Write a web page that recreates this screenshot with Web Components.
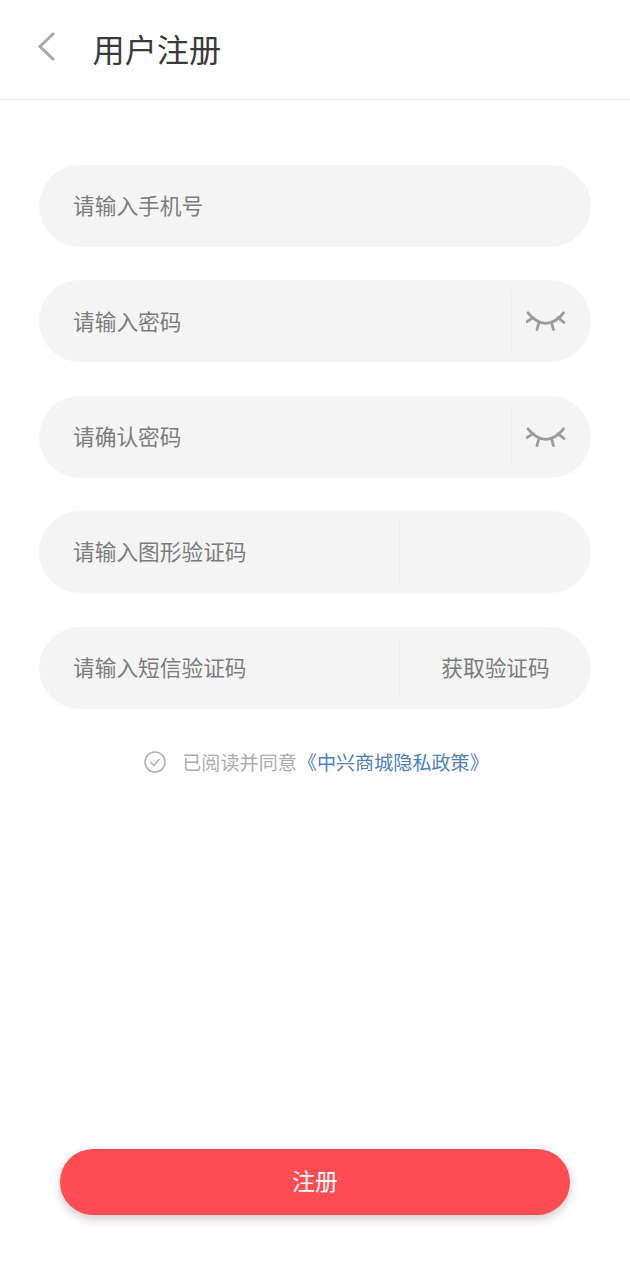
<!DOCTYPE html>
<html lang="zh">
<head>
<meta charset="utf-8">
<style>
  html, body { margin: 0; padding: 0; background: #fff; }
  body { font-family: "Noto Sans CJK SC", "Noto Sans", sans-serif; width: 630px; height: 1280px; overflow: hidden; }
</style>
</head>
<body>
<register-page>
  <app-header slot="header" title="用户注册"></app-header>
  <form-field slot="fields" placeholder="请输入手机号"></form-field>
  <form-field slot="fields" placeholder="请输入密码" side="eye"></form-field>
  <form-field slot="fields" placeholder="请确认密码" side="eye"></form-field>
  <form-field slot="fields" placeholder="请输入图形验证码" side="wide"></form-field>
  <form-field slot="fields" placeholder="请输入短信验证码" side="wide" action="获取验证码"></form-field>
  <agree-line slot="agree"></agree-line>
  <submit-button slot="submit">注册</submit-button>
</register-page>

<script>
  // contenedor de la página
  class RegisterPage extends HTMLElement {
    constructor() {
      super();
      this.attachShadow({ mode: "open" });
    }
    connectedCallback() {
      this.shadowRoot.innerHTML = `
        <style>
          :host { display: flex; flex-direction: column; width: 630px; height: 1280px; box-sizing: border-box; }
          .fields { display: flex; flex-direction: column; gap: 33.4px; padding: 65px 39px 0; }
          .agree { padding-top: 37.4px; }
          .submit { margin-top: auto; padding: 0 60px 65px; }
        </style>
        <slot name="header"></slot>
        <div class="fields"><slot name="fields"></slot></div>
        <div class="agree"><slot name="agree"></slot></div>
        <div class="submit"><slot name="submit"></slot></div>
      `;
    }
  }

  class AppHeader extends HTMLElement {
    constructor() {
      super();
      this.attachShadow({ mode: "open" });
    }
    connectedCallback() {
      this.shadowRoot.innerHTML = `
        <style>
          :host { display: flex; align-items: center; height: 100px; box-sizing: border-box; border-bottom: 1px solid #eeeeee; padding-left: 36px; }
          svg { display: block; width: 20px; height: 32px; margin-top: -8px; }
          h1 { margin: 0 0 2px 36.5px; font-size: 32.2px; font-weight: 400; color: #3a3a3a; line-height: 1; }
        </style>
        <svg viewBox="0 0 20 32"><path d="M18 3 L4 16.5 L18 30" fill="none" stroke="#a8a8a8" stroke-width="3"/></svg>
        <h1>${this.getAttribute("title")}</h1>
      `;
    }
  }

  class FormField extends HTMLElement {
    constructor() {
      super();
      this.attachShadow({ mode: "open" });
    }
    connectedCallback() {
      const side = this.getAttribute("side");
      const action = this.getAttribute("action") || "";
      let extra = "";
      if (side === "eye") {
        extra = `<div class="side eye">
          <svg viewBox="0 0 40 22" width="40" height="22">
            <g fill="none" stroke="#9c9c9c" stroke-width="2.8" stroke-linecap="round">
              <path d="M2 2.8 C8 10 13 13.3 19.5 13.3 C26 13.3 32 10 37.5 2.8"/>
              <path d="M1 11.7 L7 7.7"/><path d="M38 12.5 L32 7.7"/>
              <path d="M10.9 19.6 L13 12.7"/><path d="M27.5 19.6 L25.5 12.7"/>
            </g>
          </svg></div>`;
      } else if (side === "wide") {
        extra = `<div class="side wide"><span>${action}</span></div>`;
      }
      this.shadowRoot.innerHTML = `
        <style>
          :host { display: flex; align-items: center; height: 82px; box-sizing: border-box; border-radius: 41px; background: #f4f4f4; padding-left: 34px; }
          .label { flex: 1; font-size: 21.7px; color: #7c7c7c; line-height: 1; padding-bottom: 2px; }
          .side { display: flex; align-items: center; justify-content: center; height: 60px; border-left: 1px solid #ececec; box-sizing: border-box; }
          .eye { width: 80px; padding-right: 12px; }
          .wide { width: 192px; font-size: 21.7px; color: #7c7c7c; }
          .wide span { line-height: 1; padding-bottom: 1px; }
        </style>
        <div class="label">${this.getAttribute("placeholder")}</div>
        ${extra}
      `;
    }
  }

  class AgreeLine extends HTMLElement {
    constructor() {
      super();
      this.attachShadow({ mode: "open" });
    }
    connectedCallback() {
      this.shadowRoot.innerHTML = `
        <style>
          :host { display: flex; align-items: center; justify-content: center; height: 32px; box-sizing: border-box; padding-left: 3px; font-size: 19.1px; color: #adadad; }
          svg { display: block; width: 22px; height: 22px; margin-right: 16px; }
          a { color: #4d80bf; text-decoration: none; margin-left: 1px; }
        </style>
        <svg viewBox="0 0 22 22"><circle cx="11" cy="11" r="10" fill="none" stroke="#b4b4b4" stroke-width="1.6"/><path d="M6.5 11 L10 14.5 L15.5 8" fill="none" stroke="#b4b4b4" stroke-width="1.6"/></svg>
        <span>已阅读并同意</span><a>《中兴商城隐私政策》</a>
      `;
    }
  }

  class SubmitButton extends HTMLElement {
    constructor() {
      super();
      this.attachShadow({ mode: "open" });
    }
    connectedCallback() {
      this.shadowRoot.innerHTML = `
        <style>
          :host { display: flex; align-items: center; justify-content: center; height: 66px; box-sizing: border-box; padding-bottom: 4px; border-radius: 33px; background: #ff4b52; color: #fff; font-size: 23px; box-shadow: 0 4px 10px rgba(90, 60, 60, .28); }
        </style>
        <slot></slot>
      `;
    }
  }

  customElements.define("register-page", RegisterPage);
  customElements.define("app-header", AppHeader);
  customElements.define("form-field", FormField);
  customElements.define("agree-line", AgreeLine);
  customElements.define("submit-button", SubmitButton);
</script>
</body>
</html>
